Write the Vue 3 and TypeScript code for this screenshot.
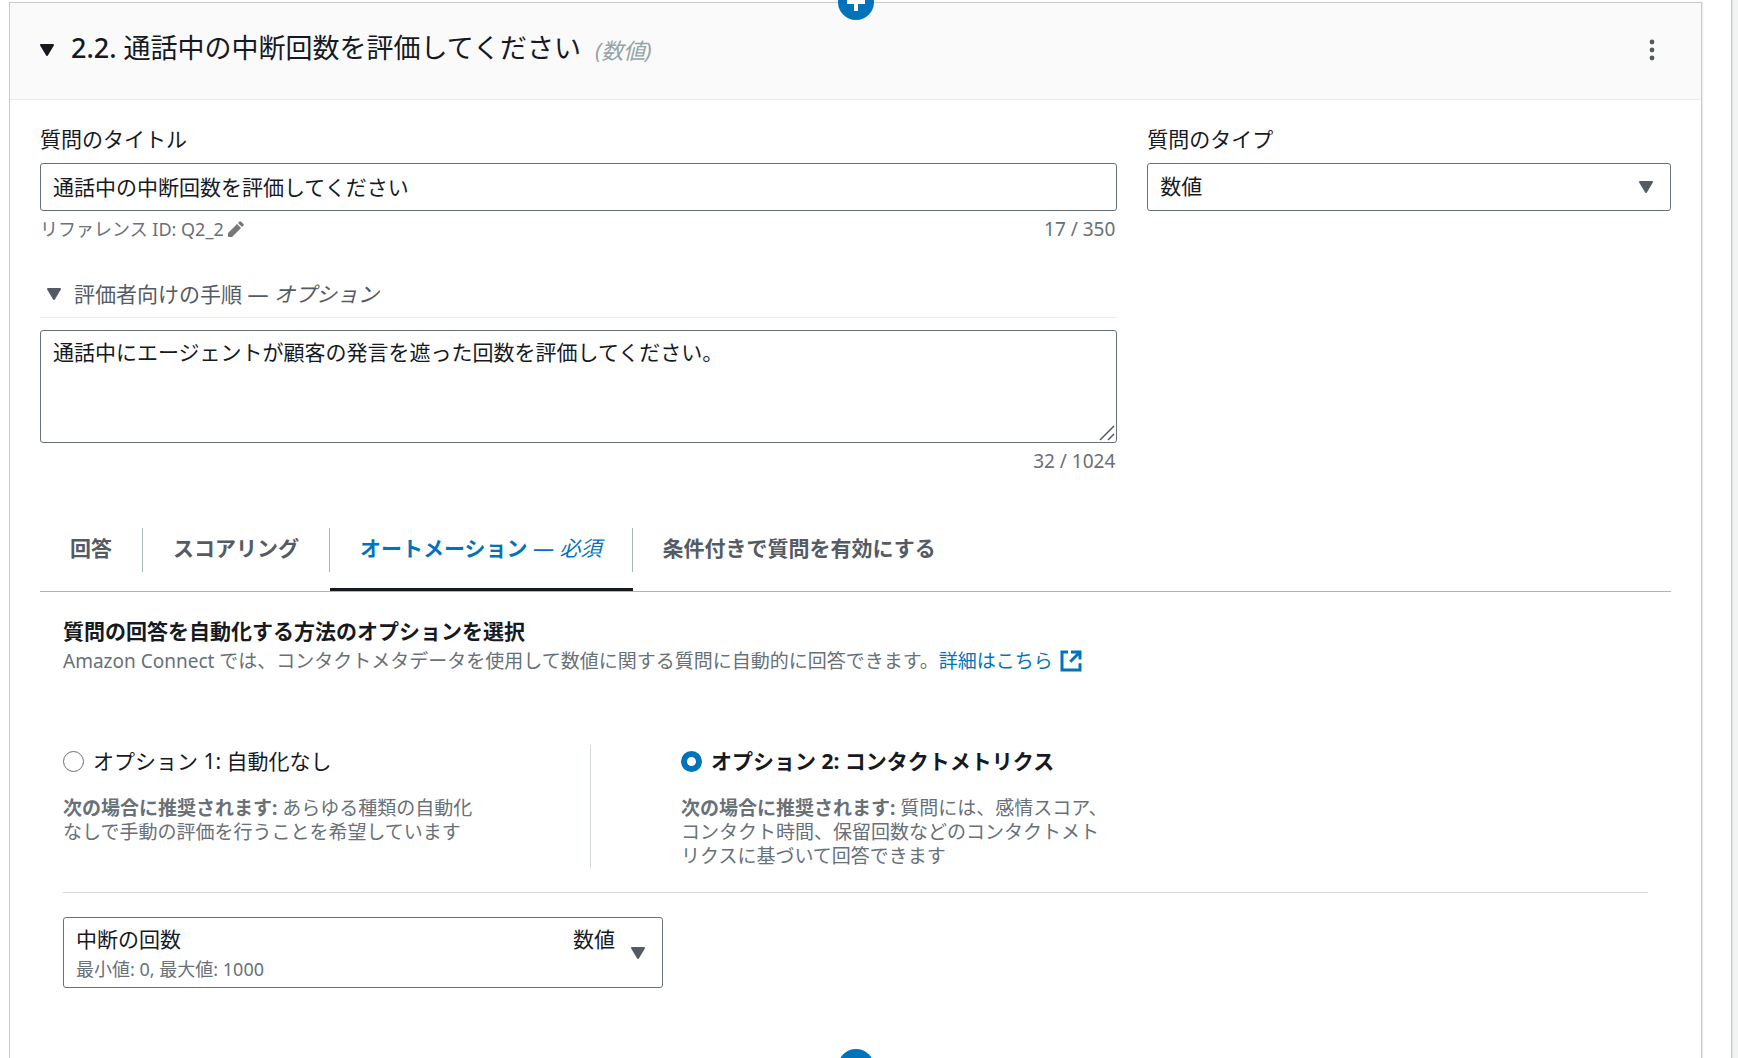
<script setup lang="ts">
import { ref } from 'vue'

interface Tab {
  id: string
  label: string
  note?: string
}

interface Automation {
  id: string
  label: string
  detail: string
}

const title = ref('通話中の中断回数を評価してください')
const instructions = ref('通話中にエージェントが顧客の発言を遮った回数を評価してください。')
const questionType = ref('数値')
const metric = ref('中断の回数')
const activeTab = ref('automation')
const automation = ref('metrics')

const tabs: Tab[] = [
  { id: 'answers', label: '回答' },
  { id: 'scoring', label: 'スコアリング' },
  { id: 'automation', label: 'オートメーション', note: '必須' },
  { id: 'conditions', label: '条件付きで質問を有効にする' },
]

const automations: Automation[] = [
  {
    id: 'none',
    label: 'オプション 1: 自動化なし',
    detail: 'あらゆる種類の自動化なしで手動の評価を行うことを希望しています',
  },
  {
    id: 'metrics',
    label: 'オプション 2: コンタクトメトリクス',
    detail: '質問には、感情スコア、コンタクト時間、保留回数などのコンタクトメトリクスに基づいて回答できます',
  },
]
</script>

<template>
  <div class="page">
    <main class="form-panel">
      <section class="question">
        <button class="add add-before" type="button" aria-label="質問を前に追加">
          <svg viewBox="0 0 36 36" aria-hidden="true"><path d="M18 9v18M9 18h18" /></svg>
        </button>

        <header class="question-header">
          <button class="toggle" type="button" aria-label="折りたたむ">
            <svg class="caret" viewBox="0 0 16 12" aria-hidden="true"><path d="M2 1h12L8 11z" /></svg>
          </button>
          <h2><span class="number">2.2.</span> 通話中の中断回数を評価してください</h2>
          <em class="kind">(数値)</em>
          <button class="more" type="button" aria-label="その他の操作">
            <svg viewBox="0 0 6 22" aria-hidden="true">
              <circle cx="3" cy="3" r="2.4" /><circle cx="3" cy="11" r="2.4" /><circle cx="3" cy="19" r="2.4" />
            </svg>
          </button>
        </header>

        <div class="question-body">
          <div class="fields">
            <div class="field-title">
              <label class="label" for="title">質問のタイトル</label>
              <input id="title" v-model="title" class="control" type="text" />
              <div class="hint">
                <span>リファレンス ID: Q2_2</span>
                <button class="edit" type="button" aria-label="リファレンス ID を編集">
                  <svg viewBox="0 0 16 16" aria-hidden="true">
                    <path d="M0 16v-4l9-9 4 4-9 9zM10 2l1.500-1.500q.7-.7 1.400 0l2.600 2.600q.7.7 0 1.400L14 6z" />
                  </svg>
                </button>
                <span class="count">17 / 350</span>
              </div>

              <button class="steps-toggle" type="button">
                <svg class="caret" viewBox="0 0 16 12" aria-hidden="true"><path d="M2 1h12L8 11z" /></svg>
                <span>評価者向けの手順 — <em>オプション</em></span>
              </button>
              <div class="area">
                <textarea v-model="instructions" class="control" aria-label="評価者向けの手順"></textarea>
                <svg class="grip" viewBox="0 0 16 16" aria-hidden="true"><path d="M1 15 15 1M9 15l6-6" /></svg>
              </div>
              <div class="hint"><span class="count">32 / 1024</span></div>
            </div>

            <div class="field-type">
              <label class="label" for="type">質問のタイプ</label>
              <div class="select">
                <select id="type" v-model="questionType" class="control">
                  <option>数値</option>
                </select>
                <svg class="caret" viewBox="0 0 16 12" aria-hidden="true"><path d="M2 1h12L8 11z" /></svg>
              </div>
            </div>
          </div>

          <div class="tabs" role="tablist">
            <button
              v-for="tab in tabs"
              :key="tab.id"
              class="tab"
              :class="{ active: tab.id === activeTab }"
              type="button"
              role="tab"
              :aria-selected="tab.id === activeTab"
              @click="activeTab = tab.id"
            >
              <span class="tab-text">{{ tab.label }}<i v-if="tab.note"> — <em>{{ tab.note }}</em></i></span>
            </button>
          </div>

          <div class="tab-panel" role="tabpanel">
            <h3>質問の回答を自動化する方法のオプションを選択</h3>
            <p class="lead">
              Amazon Connect では、コンタクトメタデータを使用して数値に関する質問に自動的に回答できます。<a href="#">詳細はこちら<svg viewBox="0 0 16 16" aria-hidden="true"><path d="M8 2h6v5M14 2 7.500 8.500M14 9.500V14H2V2h4" /></svg></a>
            </p>

            <div class="options" role="radiogroup">
              <div v-for="option in automations" :key="option.id" class="option">
                <label class="option-label" :class="{ chosen: option.id === automation }">
                  <input v-model="automation" type="radio" name="automation" :value="option.id" />
                  <span>{{ option.label }}</span>
                </label>
                <p class="option-detail"><b>次の場合に推奨されます:</b> {{ option.detail }}</p>
              </div>
            </div>

            <div class="select metric">
              <select v-model="metric" class="control" aria-label="メトリクス">
                <option>中断の回数</option>
              </select>
              <span class="metric-range">最小値: 0, 最大値: 1000</span>
              <span class="metric-kind">数値</span>
              <svg class="caret" viewBox="0 0 16 12" aria-hidden="true"><path d="M2 1h12L8 11z" /></svg>
            </div>
          </div>
        </div>

        <button class="add add-after" type="button" aria-label="質問を後に追加">
          <svg viewBox="0 0 36 36" aria-hidden="true"><path d="M18 9v18M9 18h18" /></svg>
        </button>
      </section>
    </main>
  </div>
</template>

<style>
body {
  background: #f2f3f3;
}
</style>

<style scoped>
* {
  box-sizing: border-box;
}

.page {
  height: 100vh;
  overflow: hidden;
  padding-right: 6px;
  font-family: "Noto Sans", "Noto Sans CJK JP", sans-serif;
  font-size: 21px;
  line-height: 32px;
  color: #16191f;
}

button,
input,
select,
textarea {
  margin: 0;
  font: inherit;
  color: inherit;
}

button {
  padding: 0;
  border: 0;
  background: none;
  cursor: pointer;
}

h2,
h3,
p {
  margin: 0;
}

svg {
  display: block;
}

.form-panel {
  min-height: 100%;
  padding: 2px 29px 0 9px;
  border-right: 1px solid #c6cccd;
  background: #fff;
  box-shadow: 1px 0 1px #e4e8e8;
}

.question {
  position: relative;
  border: 1px solid #c6cccd;
  background: #fff;
  box-shadow: 1px 0 1px #eaeded;
}

.add {
  position: absolute;
  left: 50%;
  width: 36px;
  height: 36px;
  margin-left: -18px;
  border-radius: 50%;
  background: #0073bb;
}

.add path {
  fill: none;
  stroke: #fff;
  stroke-width: 4;
}

.add-before {
  top: -19px;
}

.add-after {
  bottom: -19px;
}

.question-header {
  display: flex;
  align-items: center;
  padding: 28px 46px 30px 29px;
  border-bottom: 1px solid #eaeded;
  background: #fafafa;
}

.caret {
  width: 16px;
  height: 12px;
  fill: #545b64;
  stroke: #545b64;
  stroke-width: 2;
  stroke-linejoin: round;
}

.toggle .caret {
  fill: #16191f;
  stroke: #16191f;
}

h2 {
  margin-left: 16px;
  padding-bottom: 4px;
  font-size: 27px;
  font-weight: 400;
  line-height: 34px;
}

.number {
  font-weight: 500;
}

.kind {
  margin-left: 14px;
  font-size: 22px;
  color: #95a5a6;
}

.more {
  margin-left: auto;
}

.more svg {
  width: 6px;
  height: 22px;
  fill: #545b64;
}

.question-body {
  padding: 23px 30px 78px;
}

.fields {
  display: grid;
  grid-template-columns: repeat(12, 1fr);
  gap: 30px;
}

.field-title {
  grid-column: span 8;
}

.field-type {
  grid-column: span 4;
}

.label {
  display: block;
  margin-bottom: 8px;
}

.control {
  display: block;
  width: 100%;
  height: 48px;
  padding: 0 12px 3px;
  border: 1px solid #687078;
  border-radius: 3px;
  background: #fff;
  outline: none;
}

.hint {
  display: flex;
  align-items: center;
  margin-top: 6px;
  font-size: 18px;
  line-height: 24px;
  color: #687078;
}

.edit {
  margin-left: 4px;
}

.edit svg {
  width: 16px;
  height: 16px;
  fill: #777;
}

.count {
  margin-left: auto;
  padding-right: 2px;
  font-size: 19px;
}

.steps-toggle {
  display: flex;
  align-items: center;
  gap: 12px;
  width: 100%;
  margin: 37px 0 12px;
  padding: 0 6px 7px;
  border-bottom: 1px solid #eaeded;
  color: #545b64;
}

.area {
  position: relative;
}

textarea.control {
  height: 113px;
  padding: 5px 12px;
  resize: none;
}

.grip {
  position: absolute;
  right: 2px;
  bottom: 2px;
  width: 16px;
  height: 16px;
  fill: none;
  stroke: #545b64;
  stroke-width: 1.5;
}

.select {
  position: relative;
}

.select .control {
  appearance: none;
}

.select .caret {
  position: absolute;
  top: 50%;
  right: 17px;
  margin-top: -6px;
  pointer-events: none;
}

.tabs {
  display: flex;
  margin-top: 55px;
  border-bottom: 1px solid #aab7b8;
}

.tab {
  padding-bottom: 16px;
  border-bottom: 3px solid transparent;
  font-weight: 700;
  color: #545b64;
}

.tab-text {
  display: block;
  padding: 4px 30px 8px;
  border-right: 1px solid #aab7b8;
}

.tab:last-child .tab-text {
  border-right: 0;
}

.tab i {
  font-style: normal;
  font-weight: 400;
}

.tab.active {
  border-bottom-color: #16191f;
  color: #0073bb;
}

.tab-panel {
  padding: 25px 23px 0;
}

h3 {
  font-size: 21px;
  line-height: 28px;
}

.lead {
  margin-top: 3px;
  font-size: 19px;
  line-height: 26px;
  color: #687078;
}

.lead a {
  color: #0073bb;
  text-decoration: none;
}

.lead svg {
  display: inline-block;
  width: 24px;
  height: 24px;
  margin-left: 6px;
  vertical-align: -5px;
  fill: none;
  stroke: currentColor;
  stroke-width: 2;
}

.options {
  display: flex;
  margin-top: 71px;
  padding-bottom: 24px;
  border-bottom: 1px solid #d5dbdb;
}

.option {
  width: 527px;
  padding-right: 110px;
}

.option + .option {
  padding-right: 8px;
  padding-left: 90px;
  border-left: 1px solid #d5dbdb;
}

.option-label {
  display: flex;
  align-items: center;
  gap: 9px;
}

.chosen {
  font-weight: 700;
}

.option-label input {
  width: 21px;
  height: 21px;
  border: 1px solid #687078;
  border-radius: 50%;
  background: #fff;
  appearance: none;
}

.option-label input:checked {
  border: 6px solid #0073bb;
}

.option-detail {
  margin-top: 19px;
  font-size: 19px;
  line-height: 24px;
  color: #687078;
}

.metric {
  width: 600px;
  max-width: 100%;
  margin-top: 24px;
}

.metric .control {
  height: 71px;
  padding-bottom: 28px;
}

.metric-range,
.metric-kind {
  position: absolute;
  pointer-events: none;
}

.metric-range {
  bottom: 7px;
  left: 13px;
  font-size: 18px;
  line-height: 24px;
  color: #687078;
}

.metric-kind {
  top: 6px;
  right: 48px;
}
</style>
